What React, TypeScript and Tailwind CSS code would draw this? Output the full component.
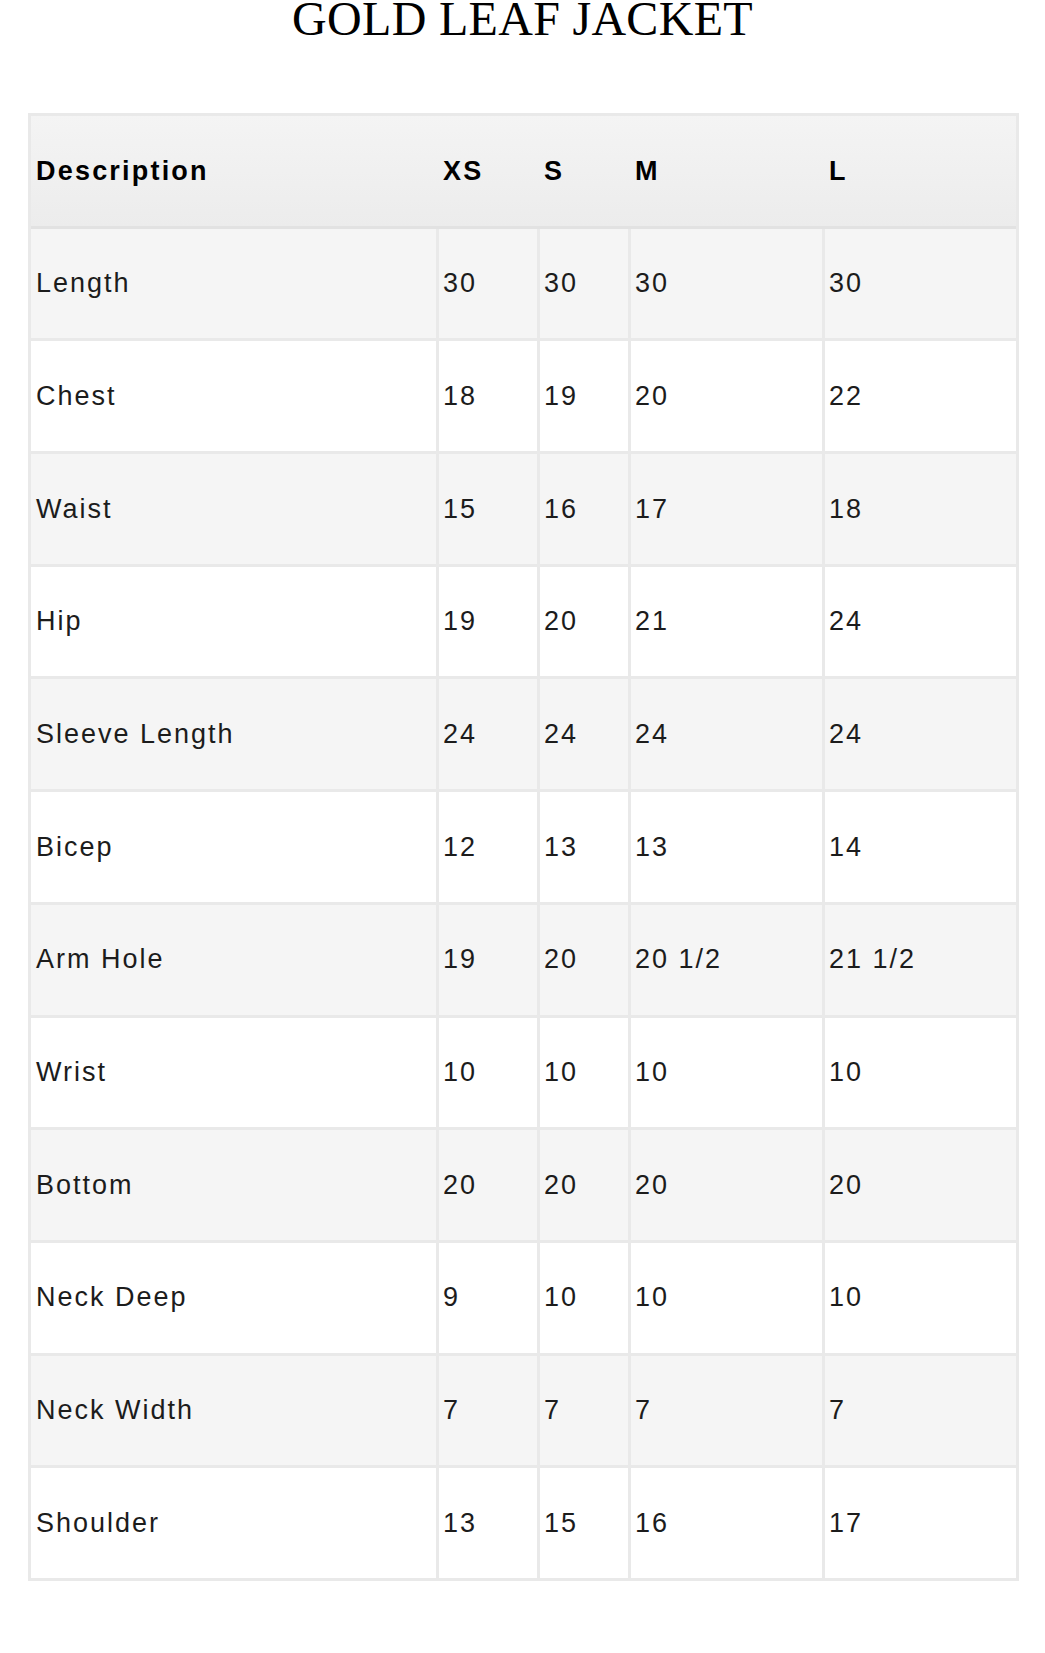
import React from 'react';

const sizes = ['XS', 'S', 'M', 'L'];

const rows: [string, string[]][] = [
  ['Length', ['30', '30', '30', '30']],
  ['Chest', ['18', '19', '20', '22']],
  ['Waist', ['15', '16', '17', '18']],
  ['Hip', ['19', '20', '21', '24']],
  ['Sleeve Length', ['24', '24', '24', '24']],
  ['Bicep', ['12', '13', '13', '14']],
  ['Arm Hole', ['19', '20', '20 1/2', '21 1/2']],
  ['Wrist', ['10', '10', '10', '10']],
  ['Bottom', ['20', '20', '20', '20']],
  ['Neck Deep', ['9', '10', '10', '10']],
  ['Neck Width', ['7', '7', '7', '7']],
  ['Shoulder', ['13', '15', '16', '17']],
];

// column widths incl. the 3px left divider
const colW = ['w-[405px]', 'w-[101px]', 'w-[91px]', 'w-[194px]', 'w-[194px]'];

const App: React.FC = () => {
  return (
    <div className="w-[1045px] min-h-[1653px] bg-white overflow-hidden">
      <h1
        className="-mt-[5px] text-center text-[48px] leading-none text-black tracking-[0.3px]"
        style={{ fontFamily: '"Liberation Serif", "Times New Roman", serif' }}
      >
        GOLD LEAF JACKET
      </h1>

      <div
        className="mt-[70px] ml-[28px] w-[991px] border-[3px] border-[#e9e9e9]"
        style={{ fontFamily: '"Liberation Sans", Arial, sans-serif' }}
      >
        <div className="flex h-[112.7px] items-center bg-gradient-to-b from-[#f4f4f4] to-[#ececec] border-b-[3px] border-[#e2e2e2]">
          <div className={`${colW[0]} shrink-0 pl-[5px] text-[27px] font-bold tracking-[2.2px] text-black`}>Description</div>
          {sizes.map((s, i) => (
            <div key={s} className={`${colW[i + 1]} shrink-0 pl-[7px] text-[27px] font-bold tracking-[2.2px] text-black`}>
              {s}
            </div>
          ))}
        </div>

        {rows.map(([label, vals], idx) => {
          const last = idx === rows.length - 1;
          return (
            <div
              key={label}
              className={`flex ${last ? 'h-[109.7px]' : 'h-[112.7px] border-b-[3px] border-[#e9e9e9]'} ${idx % 2 === 0 ? 'bg-[#f5f5f5]' : 'bg-white'}`}
            >
              <div className={`${colW[0]} shrink-0 flex items-center pl-[5px] text-[27px] tracking-[2px] text-[#1c1c1c]`}>{label}</div>
              {vals.map((v, i) => (
                <div
                  key={i}
                  className={`${colW[i + 1]} shrink-0 flex items-center border-l-[3px] border-[#e9e9e9] pl-[4px] text-[27px] tracking-[2px] text-[#1c1c1c]`}
                >
                  {v}
                </div>
              ))}
            </div>
          );
        })}
      </div>
    </div>
  );
};

export default App;
